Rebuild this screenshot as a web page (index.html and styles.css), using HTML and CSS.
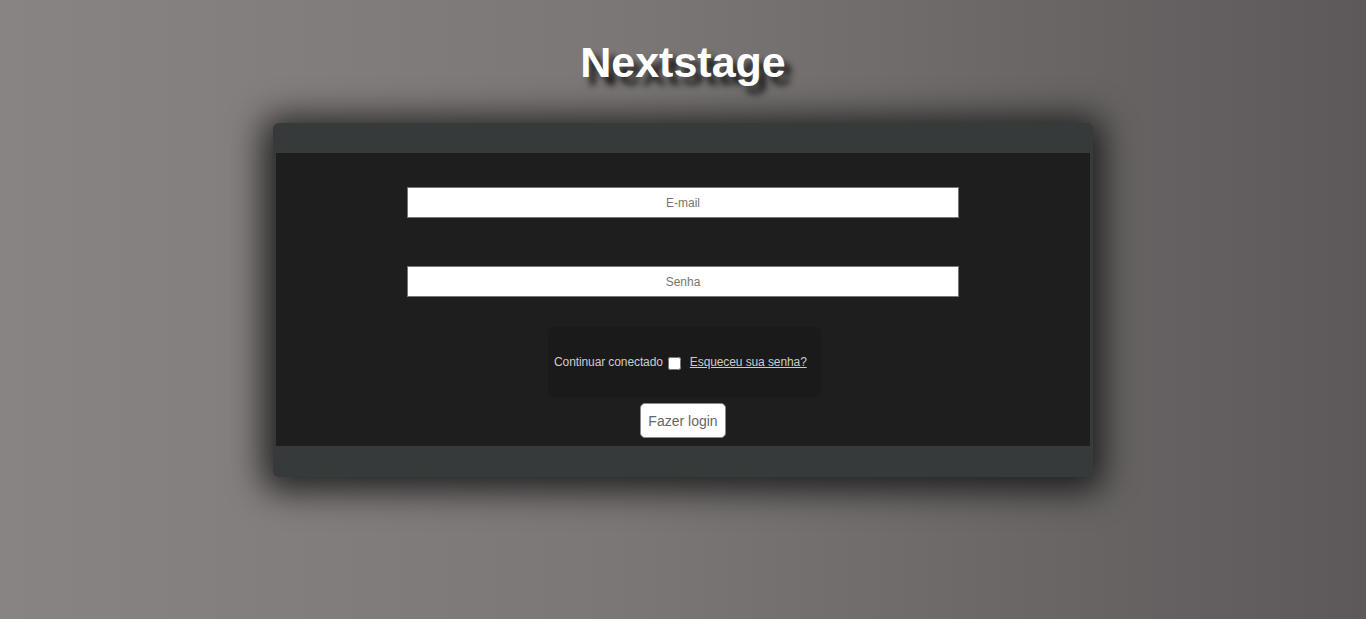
FILE: index.html
```html
<!DOCTYPE html>
<html lang="pt-BR">
<head>
<meta charset="utf-8">
<title>Nextstage</title>
<link rel="stylesheet" href="styles.css">
</head>
<body>
<h1 class="title">Nextstage</h1>
<div class="card">
  <div class="card-head"></div>
  <form class="card-body">
    <input class="field" type="text" placeholder="E-mail">
    <input class="field field-pass" type="password" placeholder="Senha">
    <div class="remember">
      <span class="remember-label">Continuar conectado</span>
      <input class="check" type="checkbox">
      <a class="forgot" href="#">Esqueceu sua senha?</a>
    </div>
    <button class="login" type="button">Fazer login</button>
  </form>
  <div class="card-foot"></div>
</div>
</body>
</html>
```
FILE: styles.css
```css
html, body {
  margin: 0;
  height: 100%;
}
body {
  background: linear-gradient(to right, #888483, #7b7776 45%, #5d595a);
  font-family: "Liberation Sans", Arial, sans-serif;
  overflow: hidden;
}
.title {
  margin: 0;
  padding-top: 38px;
  height: 86px;
  box-sizing: border-box;
  text-align: center;
  font-size: 43px;
  line-height: 48px;
  font-weight: bold;
  color: #fff;
  text-shadow: 7px 8px 6px #1a1a1a;
}
.card {
  width: 820px;
  margin: 37px auto 0;
  background: #363a3b;
  border-radius: 6px;
  box-shadow: 0 4px 34px 10px rgba(0, 0, 0, 0.72);
}
.card-head {
  height: 30px;
}
.card-foot {
  height: 31px;
}
.card-body {
  margin: 0 3px 0 3px;
  height: 293px;
  box-sizing: border-box;
  background: #1e1e1e;
  display: flex;
  flex-direction: column;
  align-items: center;
  padding-top: 34px;
}
.field {
  width: 552px;
  height: 31px;
  box-sizing: border-box;
  margin: 0;
  border: 1px solid #767676;
  background: #fff;
  text-align: center;
  font-family: "Liberation Sans", Arial, sans-serif;
  font-size: 12px;
  color: #333;
  outline: none;
}
.field::placeholder {
  color: #757575;
}
.field-pass {
  margin-top: 48px;
}
.remember {
  margin-top: 30px;
  width: 273px;
  height: 70px;
  box-sizing: border-box;
  padding-left: 6px;
  margin-left: 3px;
  background: #1a1a1a;
  border-radius: 6px;
  display: flex;
  align-items: center;
  font-size: 12px;
  letter-spacing: -0.1px;
  color: #cccccc;
}
.check {
  width: 13px;
  height: 13px;
  margin: 3px 9px 0 5px;
}
.forgot {
  color: #cccccc;
  text-decoration: underline;
}
.login {
  margin-top: 6px;
  width: 86px;
  height: 35px;
  box-sizing: border-box;
  padding: 0;
  background: #fff;
  border: 1px solid #8a8a8a;
  border-radius: 5px;
  font-family: "Liberation Sans", Arial, sans-serif;
  font-size: 14px;
  color: #666;
}
```
